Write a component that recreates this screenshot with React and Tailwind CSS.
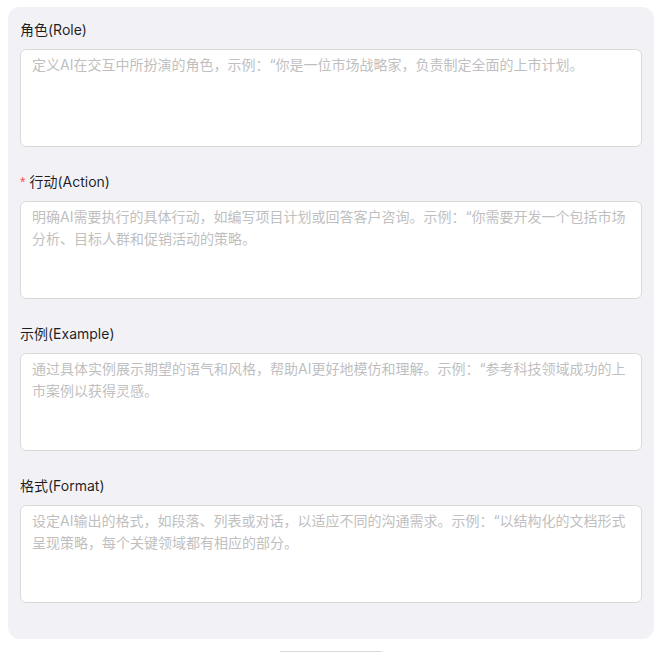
import React from "react";

const fields = [
  {
    label: "角色(Role)",
    required: false,
    placeholder:
      "定义AI在交互中所扮演的角色，示例：“你是一位市场战略家，负责制定全面的上市计划。",
  },
  {
    label: "行动(Action)",
    required: true,
    placeholder:
      "明确AI需要执行的具体行动，如编写项目计划或回答客户咨询。示例：“你需要开发一个包括市场分析、目标人群和促销活动的策略。",
  },
  {
    label: "示例(Example)",
    required: false,
    placeholder:
      "通过具体实例展示期望的语气和风格，帮助AI更好地模仿和理解。示例：“参考科技领域成功的上市案例以获得灵感。",
  },
  {
    label: "格式(Format)",
    required: false,
    placeholder:
      "设定AI输出的格式，如段落、列表或对话，以适应不同的沟通需求。示例：“以结构化的文档形式呈现策略，每个关键领域都有相应的部分。",
  },
];

export default function App() {
  return (
    <div
      className="min-h-[652px] bg-white pt-[7px] pl-[8px]"
      style={{ fontFamily: 'Inter, "Noto Sans CJK SC", sans-serif' }}
    >
      <div className="w-[646px] rounded-[12px] bg-[#f1f1f6] p-[12px]">
        {fields.map((f) => (
          <div key={f.label} className="mb-[24px] flex flex-col">
            <div className="flex h-[22px] items-center text-[14px] leading-[22px] text-[rgba(0,0,0,0.88)]">
              {f.required && (
                <span className="mr-[4px] text-[14px] text-[#ff4d4f]" style={{ fontFamily: "SimSun, sans-serif" }}>
                  *
                </span>
              )}
              <span>{f.label}</span>
            </div>
            <div className="h-[8px]" />
            <textarea
              className="h-[98px] w-full resize-none rounded-[6px] border border-[#d9d9d9] bg-white px-[11px] py-[4px] text-[14px] leading-[22px] text-[rgba(0,0,0,0.88)] outline-none placeholder:text-[#bfbfbf]"
              placeholder={f.placeholder}
            />
          </div>
        ))}
      </div>
      <div className="mt-[12px] flex w-[646px] justify-center">
        <button
          aria-label="保存"
          className="h-[32px] w-[110px] rounded-[6px] border border-[#d9d9d9] bg-white"
        />
      </div>
    </div>
  );
}
